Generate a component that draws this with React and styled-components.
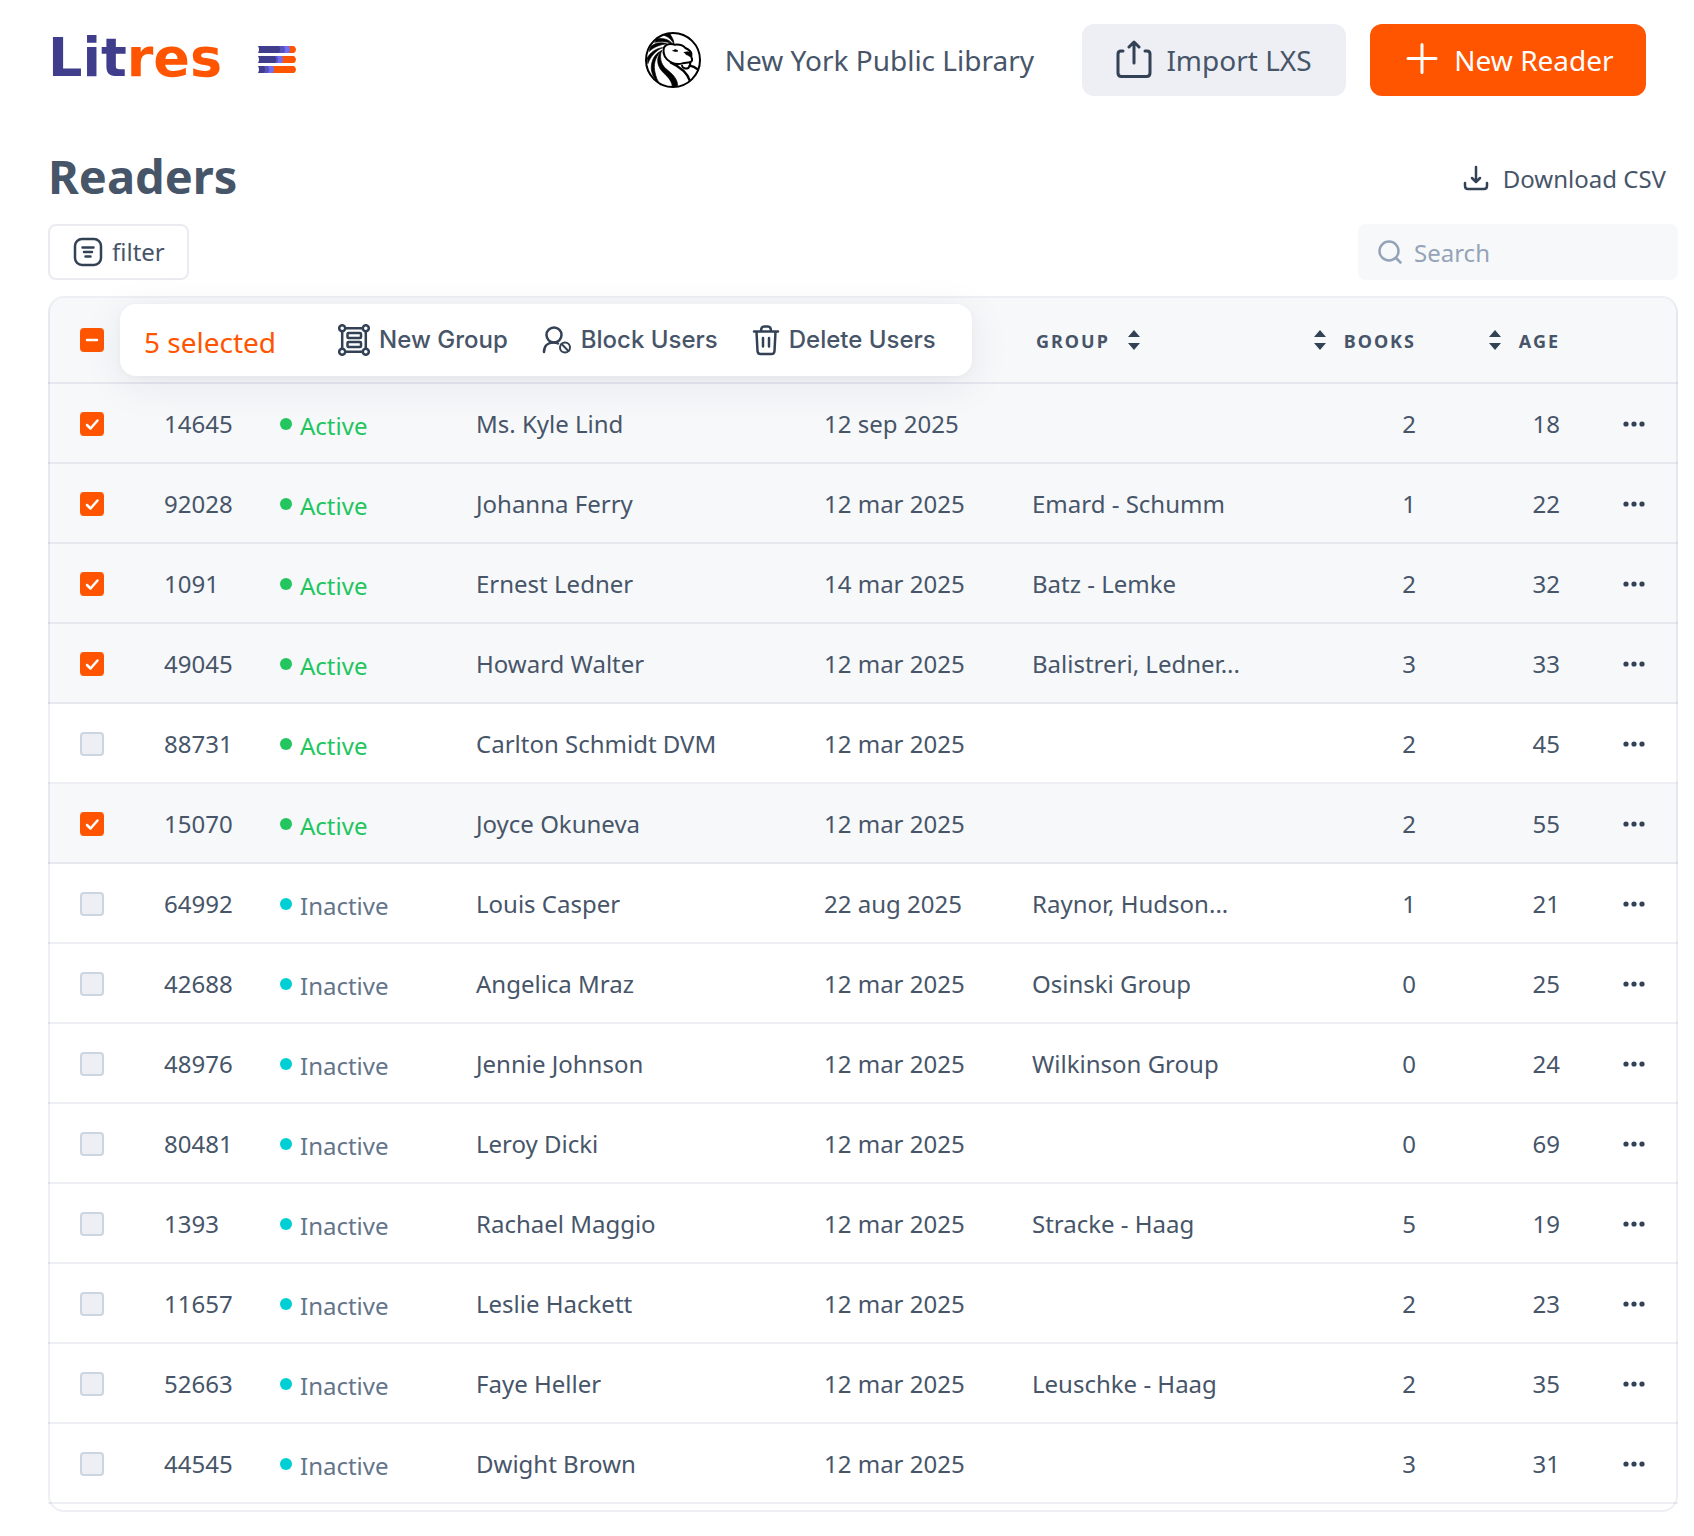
import React, { useState } from "react";
import styled, { createGlobalStyle } from "styled-components";

const GlobalStyle = createGlobalStyle`
  *, *::before, *::after { box-sizing: border-box; }
  body {
    margin: 0;
    background: #ffffff;
    color: #475569;
    font-family: "Noto Sans", "Open Sans", sans-serif;
    font-size: 24px;
    line-height: 32px;
  }
  button, input { font: inherit; color: inherit; }
`;

const Page = styled.div`
  padding: 24px 16px 24px 48px;
`;

const Header = styled.header`
  display: flex;
  align-items: center;
  justify-content: space-between;
  height: 72px;
  padding-right: 32px;
`;

const Brand = styled.a`
  display: flex;
  align-items: center;
  justify-content: space-between;
  width: 248px;
  height: 72px;
  text-decoration: none;
`;

const Wordmark = styled.span`
  padding-bottom: 4px;
  font-family: "DejaVu Sans", sans-serif;
  font-weight: 700;
  font-size: 54px;
  line-height: 64px;
  color: #3f3d8c;
`;

const WordmarkAccent = styled.span`
  color: #ff5500;
`;

const HeaderActions = styled.div`
  display: flex;
  align-items: center;
  gap: 24px;
`;

const Library = styled.div`
  display: flex;
  align-items: center;
  gap: 24px;
  margin-right: 24px;
  font-size: 28px;
`;

const BigButton = styled.button`
  display: flex;
  align-items: center;
  justify-content: center;
  gap: ${(p) => (p.$primary ? 16 : 14)}px;
  width: ${(p) => (p.$primary ? 276 : 264)}px;
  height: 72px;
  border: 0;
  border-radius: 12px;
  padding: 0;
  padding-left: ${(p) => (p.$primary ? 4 : 0)}px;
  font-size: 28px;
  background: ${(p) => (p.$primary ? "#ff5500" : "#eeeff4")};
  color: ${(p) => (p.$primary ? "#ffffff" : "#475569")};
  cursor: pointer;
`;

const TitleRow = styled.div`
  display: flex;
  align-items: center;
  justify-content: space-between;
  height: 64px;
  margin-top: 48px;
  padding-right: 12px;
`;

const Title = styled.h1`
  margin: 0;
  font-size: 47px;
  line-height: 64px;
  font-weight: 700;
`;

const TextButton = styled.button`
  display: flex;
  align-items: center;
  gap: 12px;
  border: 0;
  padding: 0;
  background: none;
  cursor: pointer;
`;

const DownloadButton = styled(TextButton)`
  gap: 14px;
  padding-top: 6px;
  > svg { margin-bottom: 2px; }
`;

const FilterRow = styled.div`
  display: flex;
  justify-content: space-between;
  margin: 16px 0;
`;

const FilterButton = styled.button`
  display: flex;
  align-items: center;
  gap: 8px;
  height: 56px;
  padding: 0 22px;
  border: 2px solid #e9ebf1;
  border-radius: 8px;
  background: #ffffff;
  cursor: pointer;
`;

const SearchBox = styled.label`
  display: flex;
  align-items: center;
  gap: 12px;
  width: 320px;
  height: 56px;
  padding: 0 20px;
  border-radius: 8px;
  background: #f7f8fa;
  color: #94a3b8;
`;

const SearchInput = styled.input`
  flex: 1;
  min-width: 0;
  border: 0;
  padding: 2px 0 0;
  background: none;
  outline: none;
  &::placeholder { color: #94a3b8; opacity: 1; }
`;

const Card = styled.section`
  position: relative;
  padding: 2px 0 8px;
  border-radius: 16px;
  &::after {
    content: "";
    position: absolute;
    inset: 0;
    border: 2px solid rgba(40, 50, 110, 0.08);
    border-radius: 16px;
    pointer-events: none;
  }
`;

const Table = styled.table`
  width: 100%;
  table-layout: fixed;
  border-collapse: separate;
  border-spacing: 0;
`;

const Col = styled.col`
  width: ${(p) => (p.$w ? `${p.$w}px` : "auto")};
`;

const HeadCell = styled.th`
  height: 86px;
  padding: 0;
  padding-left: ${(p) => (p.$inset ? 4 : 0)}px;
  border-bottom: 2px solid #e5e7ef;
  background: #f7f8fa;
  text-align: left;
  &:first-child { padding-left: 32px; border-top-left-radius: 16px; }
  &:last-child { border-top-right-radius: 16px; }
`;

const SortButton = styled.button`
  display: flex;
  align-items: center;
  justify-content: ${(p) => (p.$end ? "flex-end" : "flex-start")};
  gap: 18px;
  width: 100%;
  border: 0;
  padding: 0;
  background: none;
  font-size: 18px;
  font-weight: 700;
  letter-spacing: 2px;
  text-transform: uppercase;
  cursor: pointer;
`;

const SortLabel = styled.span`
  padding-top: 2px;
`;

const Row = styled.tr`
  background: ${(p) => (p.$on ? "#f7f8fa" : "#ffffff")};
`;

const Cell = styled.td`
  height: 80px;
  padding: 2px 0 0;
  border-bottom: 2px solid ${(p) => (p.$on ? "#e6e9ee" : "#eeeff4")};
  text-align: ${(p) => (p.$end ? "right" : "left")};
  white-space: nowrap;
  &:first-child { padding-left: 32px; }
`;

const CheckWrap = styled.span`
  display: grid;
  width: 24px;
  height: 24px;
  > * { grid-area: 1 / 1; }
  > svg { pointer-events: none; }
`;

const CheckInput = styled.input`
  appearance: none;
  width: 24px;
  height: 24px;
  margin: 0;
  border: 2px solid ${(p) => (p.$filled ? "#ff5500" : "#cbd5e1")};
  border-radius: 4px;
  background: ${(p) => (p.$filled ? "#ff5500" : "#eeeff4")};
  cursor: pointer;
`;

const Status = styled.span`
  display: flex;
  align-items: center;
  gap: 8px;
  color: ${(p) => (p.$active ? "#22c55e" : "#64748b")};
  &::before {
    content: "";
    width: 12px;
    height: 12px;
    border-radius: 50%;
    background: ${(p) => (p.$active ? "#22c55e" : "#00cfd5")};
  }
`;

const StatusText = styled.span`
  padding-top: 4px;
`;

const MoreButton = styled.button`
  display: flex;
  align-items: center;
  justify-content: flex-end;
  width: 100%;
  height: 40px;
  border: 0;
  padding: 0 32px 0 0;
  background: none;
  cursor: pointer;
`;

const BulkBar = styled.div`
  position: absolute;
  z-index: 1;
  top: 8px;
  left: 72px;
  display: flex;
  align-items: center;
  gap: 34px;
  height: 72px;
  padding: 0 36px 0 24px;
  border-radius: 16px;
  background: #ffffff;
  box-shadow: 0 8px 40px rgba(15, 40, 60, 0.08), 0 2px 8px rgba(15, 40, 60, 0.03);
`;

const SelectedCount = styled.span`
  margin-right: 28px;
  padding-top: 4px;
  font-size: 28px;
  color: #ff5500;
`;

const BulkButton = styled(TextButton)`
  gap: 9px;
  font-family: Inter, sans-serif;
  font-weight: 500;
`;

const ink = "#334155";

const volumes = [
  { y: 0, ends: [22, 27, 32] },
  { y: 10, ends: [18, 20, 25] },
  { y: 20, ends: [7, 11, 16] },
];

const BookStack = () => (
  <svg width="38" height="28" viewBox="0 0 38 28" aria-hidden="true">
    {volumes.map(({ y, ends: [a, b, c] }) => (
      <g key={y}>
        <path d={`M${c - 3} ${y}H36Q38 ${y + 1.5} 38 ${y + 3.5}T36 ${y + 7}H${c - 3}Z`} fill="#ff5500" />
        <path d={`M${b - 3} ${y}H${c - 1}Q${c + 1} ${y + 3.5} ${c - 1} ${y + 7}H${b - 3}Z`} fill="#716ef2" />
        <path d={`M${a - 3} ${y}H${b - 1}Q${b + 1} ${y + 3.5} ${b - 1} ${y + 7}H${a - 3}Z`} fill="#5552bb" />
        <path d={`M0 ${y}H${a - 1}Q${a + 1} ${y + 3.5} ${a - 1} ${y + 7}H0Q2 ${y + 3.5} 0 ${y}Z`} fill="#3f3d8c" />
      </g>
    ))}
  </svg>
);

const Lion = () => (
  <svg width="56" height="56" viewBox="0 0 168 168" fill="none" stroke="#000" strokeLinecap="round" strokeLinejoin="round" aria-hidden="true">
    <circle cx="84" cy="84" r="81" strokeWidth="6" />
    <path d="M56 48C62 37 76 34 90 38C104 37 115 40 121 48C130 52 137 57 139 64V76C143 82 142 88 135 91C137 97 134 104 130 108C123 111 113 109 111 101" strokeWidth="6" />
    <path d="M56 48C53 68 61 82 78 91C92 98 104 97 113 94L135 91" strokeWidth="6" />
    <path d="M84 56Q92 48 99 57Q91 61 84 56Z" fill="#000" strokeWidth="2" />
    <path d="M118 61Q128 57 139 62V74Q132 74 128 69Q125 72 118 61Z" fill="#000" strokeWidth="2" />
    <path d="M74 4C79 15 87 21 87 37C80 22 70 15 58 10Z" fill="#000" strokeWidth="2" />
    <path d="M35 20C54 17 72 22 82 35C65 28 48 27 30 31Z" fill="#000" strokeWidth="2" />
    <path d="M17 43C34 31 51 30 66 36C47 37 30 43 13 58Z" fill="#000" strokeWidth="2" />
    <path d="M6 79C16 61 31 50 52 47C32 57 17 72 9 94Z" fill="#000" strokeWidth="2" />
    <path d="M50 56C34 70 25 91 29 116C32 134 38 149 48 160C28 145 17 122 19 101C22 77 34 62 50 56Z" fill="#000" strokeWidth="2" />
    <path d="M49 57C34 75 35 96 48 114C61 130 78 139 82 163L98 161C98 144 87 130 70 116C50 102 42 82 49 57Z" fill="#000" strokeWidth="2" />
    <path d="M78 92C105 105 127 124 134 145" strokeWidth="7" />
    <path d="M134 101Q147 103 158 112" strokeWidth="7" />
  </svg>
);

const UploadIcon = () => (
  <svg width="36" height="40" viewBox="0 0 36 40" fill="none" stroke={ink} strokeWidth="3" strokeLinecap="round" strokeLinejoin="round" aria-hidden="true">
    <path d="M7 11H5Q2 11 2 14V33Q2 36.500 5.500 36.500H30.500Q34 36.500 34 33V14Q34 11 31 11H29" />
    <path d="M18 23V3M13 7L18 2L23 7" />
  </svg>
);

const PlusIcon = () => (
  <svg width="32" height="34" viewBox="0 0 32 34" fill="none" stroke="#fff" strokeWidth="3" strokeLinecap="round" aria-hidden="true">
    <path d="M16 1.500V29.500M2 15.500H30" />
  </svg>
);

const DownloadIcon = () => (
  <svg width="26" height="28" viewBox="0 0 26 28" fill="none" stroke={ink} strokeWidth="2.500" strokeLinecap="round" strokeLinejoin="round" aria-hidden="true">
    <path d="M13 3V17M9 14L13 18L17 14M2 19V22Q2 25 5 25H21Q24 25 24 22V19" />
  </svg>
);

const FilterIcon = () => (
  <svg width="32" height="32" viewBox="0 0 32 32" fill="none" stroke={ink} strokeWidth="2.500" strokeLinecap="round" aria-hidden="true">
    <rect x="3" y="3" width="26" height="26" rx="7" />
    <path d="M10.500 11.500H21.500M12 16H20M13.500 20.500H18.500" />
  </svg>
);

const SearchIcon = () => (
  <svg width="24" height="24" viewBox="0 0 24 24" fill="none" stroke="#94a3b8" strokeWidth="2.500" strokeLinecap="round" aria-hidden="true">
    <circle cx="11" cy="11" r="9.500" />
    <path d="M18 18L22.500 22.500" />
  </svg>
);

const SortIcon = () => (
  <svg width="12" height="20" viewBox="0 0 12 20" fill={ink} aria-hidden="true">
    <path d="M6 0L12 7H0ZM6 20L12 13H0Z" />
  </svg>
);

const GroupIcon = () => (
  <svg width="32" height="32" viewBox="0 0 32 32" fill="none" stroke={ink} strokeWidth="2.500" strokeLinejoin="round" aria-hidden="true">
    <path d="M8 4.200H24M8 27.800H24M4.200 8V24M27.800 8V24" />
    <circle cx="4.200" cy="4.200" r="3" />
    <circle cx="27.800" cy="4.200" r="3" />
    <circle cx="4.200" cy="27.800" r="3" />
    <circle cx="27.800" cy="27.800" r="3" />
    <rect x="9.500" y="9" width="13.500" height="5" rx="1" />
    <rect x="9.500" y="18" width="13.500" height="5" rx="1" />
  </svg>
);

const BlockIcon = () => (
  <svg width="30" height="28" viewBox="0 0 30 28" fill="none" stroke={ink} strokeWidth="2.500" strokeLinecap="round" aria-hidden="true">
    <circle cx="12" cy="9" r="7.500" />
    <path d="M2 26C2 20 6 16.500 11.500 16.500Q14 16.500 16 17.500" />
    <circle cx="23" cy="21.500" r="5" strokeWidth="2" />
    <path d="M19.600 18L26.400 25" strokeWidth="2" />
  </svg>
);

const TrashIcon = () => (
  <svg width="28" height="32" viewBox="0 0 28 32" fill="none" stroke={ink} strokeWidth="2.500" strokeLinecap="round" strokeLinejoin="round" aria-hidden="true">
    <path d="M2 7.500H26M9 7.500Q9 2.500 12 2.500H16Q19 2.500 19 7.500M4.500 7.500L5.500 27Q5.700 30 8.500 30H19.500Q22.300 30 22.500 27L23.500 7.500M11 14V22.500M17 14V22.500" />
  </svg>
);

const DotsIcon = () => (
  <svg width="24" height="8" viewBox="0 0 24 8" fill={ink} aria-hidden="true">
    <circle cx="4" cy="4" r="2.600" />
    <circle cx="12" cy="4" r="2.600" />
    <circle cx="20" cy="4" r="2.600" />
  </svg>
);

const Checkbox = ({ checked, mixed, label, onChange }) => (
  <CheckWrap>
    <CheckInput type="checkbox" aria-label={label} checked={checked} $filled={checked || mixed} onChange={onChange} />
    {(checked || mixed) && (
      <svg width="24" height="24" viewBox="0 0 24 24" fill="none" stroke="#fff" strokeWidth="2.500" strokeLinecap="round" strokeLinejoin="round" aria-hidden="true">
        <path d={mixed ? "M7 12H17" : "M7 13L10.500 16.500L17.500 8.500"} />
      </svg>
    )}
  </CheckWrap>
);

const readers = [
  { id: "14645", active: true, name: "Ms. Kyle Lind", date: "12 sep 2025", group: "", books: 2, age: 18 },
  { id: "92028", active: true, name: "Johanna Ferry", date: "12 mar 2025", group: "Emard - Schumm", books: 1, age: 22 },
  { id: "1091", active: true, name: "Ernest Ledner", date: "14 mar 2025", group: "Batz - Lemke", books: 2, age: 32 },
  { id: "49045", active: true, name: "Howard Walter", date: "12 mar 2025", group: "Balistreri, Ledner...", books: 3, age: 33 },
  { id: "88731", active: true, name: "Carlton Schmidt DVM", date: "12 mar 2025", group: "", books: 2, age: 45 },
  { id: "15070", active: true, name: "Joyce Okuneva", date: "12 mar 2025", group: "", books: 2, age: 55 },
  { id: "64992", active: false, name: "Louis Casper", date: "22 aug 2025", group: "Raynor, Hudson...", books: 1, age: 21 },
  { id: "42688", active: false, name: "Angelica Mraz", date: "12 mar 2025", group: "Osinski Group", books: 0, age: 25 },
  { id: "48976", active: false, name: "Jennie Johnson", date: "12 mar 2025", group: "Wilkinson Group", books: 0, age: 24 },
  { id: "80481", active: false, name: "Leroy Dicki", date: "12 mar 2025", group: "", books: 0, age: 69 },
  { id: "1393", active: false, name: "Rachael Maggio", date: "12 mar 2025", group: "Stracke - Haag", books: 5, age: 19 },
  { id: "11657", active: false, name: "Leslie Hackett", date: "12 mar 2025", group: "", books: 2, age: 23 },
  { id: "52663", active: false, name: "Faye Heller", date: "12 mar 2025", group: "Leuschke - Haag", books: 2, age: 35 },
  { id: "44545", active: false, name: "Dwight Brown", date: "12 mar 2025", group: "", books: 3, age: 31 },
];

export default function App() {
  const [selected, setSelected] = useState(["14645", "92028", "1091", "49045", "15070"]);
  const all = selected.length === readers.length;
  const toggle = (id) =>
    setSelected((s) => (s.includes(id) ? s.filter((x) => x !== id) : [...s, id]));

  return (
    <>
      <GlobalStyle />
      <Page>
        <Header>
          <Brand href="#">
            <Wordmark>
              Lit<WordmarkAccent>res</WordmarkAccent>
            </Wordmark>
            <BookStack />
          </Brand>
          <HeaderActions>
            <Library>
              <Lion />
              New York Public Library
            </Library>
            <BigButton type="button">
              <UploadIcon />
              Import LXS
            </BigButton>
            <BigButton type="button" $primary>
              <PlusIcon />
              New Reader
            </BigButton>
          </HeaderActions>
        </Header>

        <main>
          <TitleRow>
            <Title>Readers</Title>
            <DownloadButton type="button">
              <DownloadIcon />
              Download CSV
            </DownloadButton>
          </TitleRow>

          <FilterRow>
            <FilterButton type="button">
              <FilterIcon />
              filter
            </FilterButton>
            <SearchBox>
              <SearchIcon />
              <SearchInput type="text" placeholder="Search" aria-label="Search" />
            </SearchBox>
          </FilterRow>

          <Card>
            <Table>
              <colgroup>
                <Col $w={116} />
                <Col $w={116} />
                <Col $w={196} />
                <Col $w={348} />
                <Col $w={208} />
                <Col />
                <Col $w={140} />
                <Col $w={144} />
                <Col $w={118} />
              </colgroup>
              <thead>
                <tr>
                  <HeadCell>
                    <Checkbox
                      label="Select all"
                      checked={all}
                      mixed={selected.length > 0 && !all}
                      onChange={() => setSelected(all ? [] : readers.map((r) => r.id))}
                    />
                  </HeadCell>
                  <HeadCell colSpan={4} />
                  <HeadCell $inset>
                    <SortButton type="button">
                      <SortLabel>Group</SortLabel>
                      <SortIcon />
                    </SortButton>
                  </HeadCell>
                  <HeadCell>
                    <SortButton type="button" $end>
                      <SortIcon />
                      <SortLabel>Books</SortLabel>
                    </SortButton>
                  </HeadCell>
                  <HeadCell>
                    <SortButton type="button" $end>
                      <SortIcon />
                      <SortLabel>Age</SortLabel>
                    </SortButton>
                  </HeadCell>
                  <HeadCell />
                </tr>
              </thead>
              <tbody>
                {readers.map((r) => {
                  const on = selected.includes(r.id);
                  return (
                    <Row key={r.id} $on={on}>
                      <Cell $on={on}>
                        <Checkbox label={`Select ${r.name}`} checked={on} onChange={() => toggle(r.id)} />
                      </Cell>
                      <Cell $on={on}>{r.id}</Cell>
                      <Cell $on={on}>
                        <Status $active={r.active}>
                          <StatusText>{r.active ? "Active" : "Inactive"}</StatusText>
                        </Status>
                      </Cell>
                      <Cell $on={on}>{r.name}</Cell>
                      <Cell $on={on}>{r.date}</Cell>
                      <Cell $on={on}>{r.group}</Cell>
                      <Cell $on={on} $end>{r.books}</Cell>
                      <Cell $on={on} $end>{r.age}</Cell>
                      <Cell $on={on}>
                        <MoreButton type="button" aria-label={`Actions for ${r.name}`}>
                          <DotsIcon />
                        </MoreButton>
                      </Cell>
                    </Row>
                  );
                })}
              </tbody>
            </Table>
            {selected.length > 0 && (
              <BulkBar>
                <SelectedCount>{selected.length} selected</SelectedCount>
                <BulkButton type="button">
                  <GroupIcon />
                  New Group
                </BulkButton>
                <BulkButton type="button">
                  <BlockIcon />
                  Block Users
                </BulkButton>
                <BulkButton type="button">
                  <TrashIcon />
                  Delete Users
                </BulkButton>
              </BulkBar>
            )}
          </Card>
        </main>
      </Page>
    </>
  );
}
